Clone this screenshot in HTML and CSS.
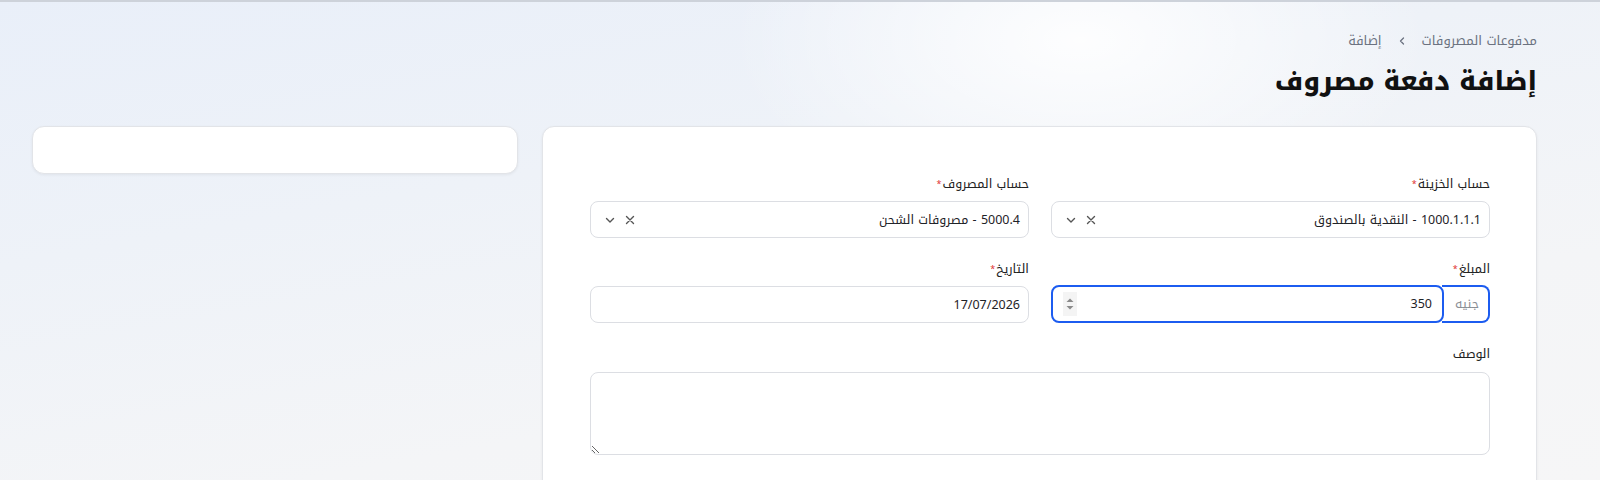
FILE: index.html
```html
<!DOCTYPE html>
<html lang="ar" dir="rtl">
<head>
  <meta charset="UTF-8">
  <title>إضافة دفعة مصروف</title>
  <link rel="stylesheet" href="styles.css">
</head>
<body>

<!-- Page wrapper -->
<div class="page">

  <!-- Header: breadcrumb + title -->
  <div class="breadcrumb">
    <span>مدفوعات المصروفات</span>
    <span class="sep">
      <svg width="12" height="12" viewBox="0 0 12 12"><path d="M7.5 3 L4.5 6 L7.5 9" fill="none" stroke="#6b7280" stroke-width="1.3" stroke-linecap="round" stroke-linejoin="round"/></svg>
    </span>
    <span>إضافة</span>
  </div>
  <h1 class="title">إضافة دفعة مصروف</h1>

  <!-- Content: form card + side card -->
  <div class="content">

    <div class="card main-card">
      <div class="form-grid">

        <div class="field">
          <label>حساب الخزينة<span class="req">*</span></label>
          <div class="select">
            <span class="value">1000.1.1.1 - النقدية بالصندوق</span>
            <span class="icons">
              <svg width="12" height="12" viewBox="0 0 12 12"><path d="M2.5 2.5 L9.5 9.5 M9.5 2.5 L2.5 9.5" stroke="#555" stroke-width="1.4" stroke-linecap="round"/></svg>
              <svg width="12" height="12" viewBox="0 0 12 12"><path d="M2.5 4.5 L6 8 L9.5 4.5" fill="none" stroke="#555" stroke-width="1.4" stroke-linecap="round" stroke-linejoin="round"/></svg>
            </span>
          </div>
        </div>

        <div class="field">
          <label>حساب المصروف<span class="req">*</span></label>
          <div class="select">
            <span class="value">5000.4 - مصروفات الشحن</span>
            <span class="icons">
              <svg width="12" height="12" viewBox="0 0 12 12"><path d="M2.5 2.5 L9.5 9.5 M9.5 2.5 L2.5 9.5" stroke="#555" stroke-width="1.4" stroke-linecap="round"/></svg>
              <svg width="12" height="12" viewBox="0 0 12 12"><path d="M2.5 4.5 L6 8 L9.5 4.5" fill="none" stroke="#555" stroke-width="1.4" stroke-linecap="round" stroke-linejoin="round"/></svg>
            </span>
          </div>
        </div>

        <div class="field">
          <label>المبلغ<span class="req">*</span></label>
          <div class="num-group">
            <span class="addon">جنيه</span>
            <div class="num-input">
              <span class="value">350</span>
              <span class="stepper">
                <svg width="10" height="16" viewBox="0 0 10 16"><path d="M1.5 6 L5 2.5 L8.5 6 Z" fill="#8a8a8a"/><path d="M1.5 10 L5 13.5 L8.5 10 Z" fill="#8a8a8a"/></svg>
              </span>
            </div>
          </div>
        </div>

        <div class="field">
          <label>التاريخ<span class="req">*</span></label>
          <div class="text-input">
            <span class="value">17/07/2026</span>
          </div>
        </div>

        <div class="field wide">
          <label>الوصف</label>
          <textarea class="textarea"></textarea>
        </div>

      </div>
    </div>

    <div class="card side-card"></div>

  </div>
</div>

</body>
</html>
```

FILE: styles.css
```css
/* Page base */
html {
  overflow: hidden;
}

body {
  margin: 0;
  height: 480px;
  box-sizing: border-box;
  overflow: hidden;
  font-family: "Noto Kufi Arabic", "Noto Sans Arabic", "DejaVu Sans", sans-serif;
  color: #1f2328;
  border-top: 2px solid #cdd2da;
  background:
    radial-gradient(ellipse 500px 260px at 1080px 40px, rgba(255,255,255,0.9), rgba(255,255,255,0) 70%),
    linear-gradient(170deg, #e9eff9 0%, #eef2f8 35%, #f4f5f7 70%, #f6f6f7 100%);
}

.page {
  padding: 30px 63px 0 32px;
  height: 100%;
  box-sizing: border-box;
  overflow: hidden;
}

/* Breadcrumb */
.breadcrumb {
  display: flex;
  align-items: center;
  gap: 14px;
  font-size: 13px;
  line-height: 18px;
  color: #6b7280;
  height: 18px;
}

.breadcrumb .sep {
  display: flex;
  align-items: center;
}

/* Page title */
.title {
  margin: 12px 0 0;
  font-size: 26px;
  font-weight: 800;
  color: #111;
  line-height: 40px;
}

/* Two-column content */
.content {
  display: grid;
  grid-template-columns: 1fr 486px;
  gap: 24px;
  margin-top: 24px;
  align-items: start;
}

.card {
  background: #fff;
  border: 1px solid #e2e4e8;
  border-radius: 12px;
  box-shadow: 0 1px 3px rgba(0, 0, 0, 0.06);
}

.main-card {
  padding: 49px 46px 40px 47px;
  height: 400px;
  box-sizing: border-box;
}

.side-card {
  height: 48px;
  box-sizing: border-box;
}

/* Form layout */
.form-grid {
  display: grid;
  grid-template-columns: 1fr 1fr;
  column-gap: 22px;
  row-gap: 23px;
}

.field {
  display: flex;
  flex-direction: column;
  gap: 8px;
}

.field.wide {
  grid-column: 1 / -1;
  gap: 9px;
}

.field label {
  font-size: 12.5px;
  line-height: 17px;
  color: #222;
}

.req {
  color: #e03131;
  font-size: 9px;
  vertical-align: top;
  margin-right: 1px;
}

/* Select box */
.select,
.text-input {
  height: 37px;
  box-sizing: border-box;
  border: 1px solid #dcdee3;
  border-radius: 8px;
  display: flex;
  align-items: center;
  justify-content: space-between;
  padding: 0 8px 0 13px;
  font-size: 12.5px;
  color: #1f2328;
  background: #fff;
}

.select .icons {
  display: flex;
  align-items: center;
  gap: 8px;
  direction: ltr;
  flex-direction: row-reverse;
}

.select .icons svg {
  display: block;
}

/* Number input with currency addon */
.num-group {
  display: flex;
  height: 38px;
  margin-top: -1px;
}

.addon {
  width: 48px;
  box-sizing: border-box;
  border: 2px solid #1c5cf0;
  border-left: none;
  border-radius: 0 8px 8px 0;
  display: flex;
  align-items: center;
  justify-content: center;
  font-size: 12.5px;
  color: #8b8f96;
  padding-left: 4px;
}

.num-input {
  flex: 1;
  box-sizing: border-box;
  border: 2px solid #1c5cf0;
  border-radius: 8px;
  margin-right: -2px;
  display: flex;
  align-items: center;
  justify-content: space-between;
  padding: 0 10px 0 10px;
  font-size: 12.5px;
  color: #1f2328;
}

.stepper {
  display: flex;
  align-items: center;
  justify-content: center;
  width: 14px;
  height: 24px;
  background: #f4f4f4;
}

.stepper svg {
  display: block;
}

/* Description */
.textarea {
  height: 83px;
  box-sizing: border-box;
  border: 1px solid #dcdee3;
  border-radius: 8px;
  font-family: inherit;
  font-size: 13px;
  resize: vertical;
  outline: none;
}
```
